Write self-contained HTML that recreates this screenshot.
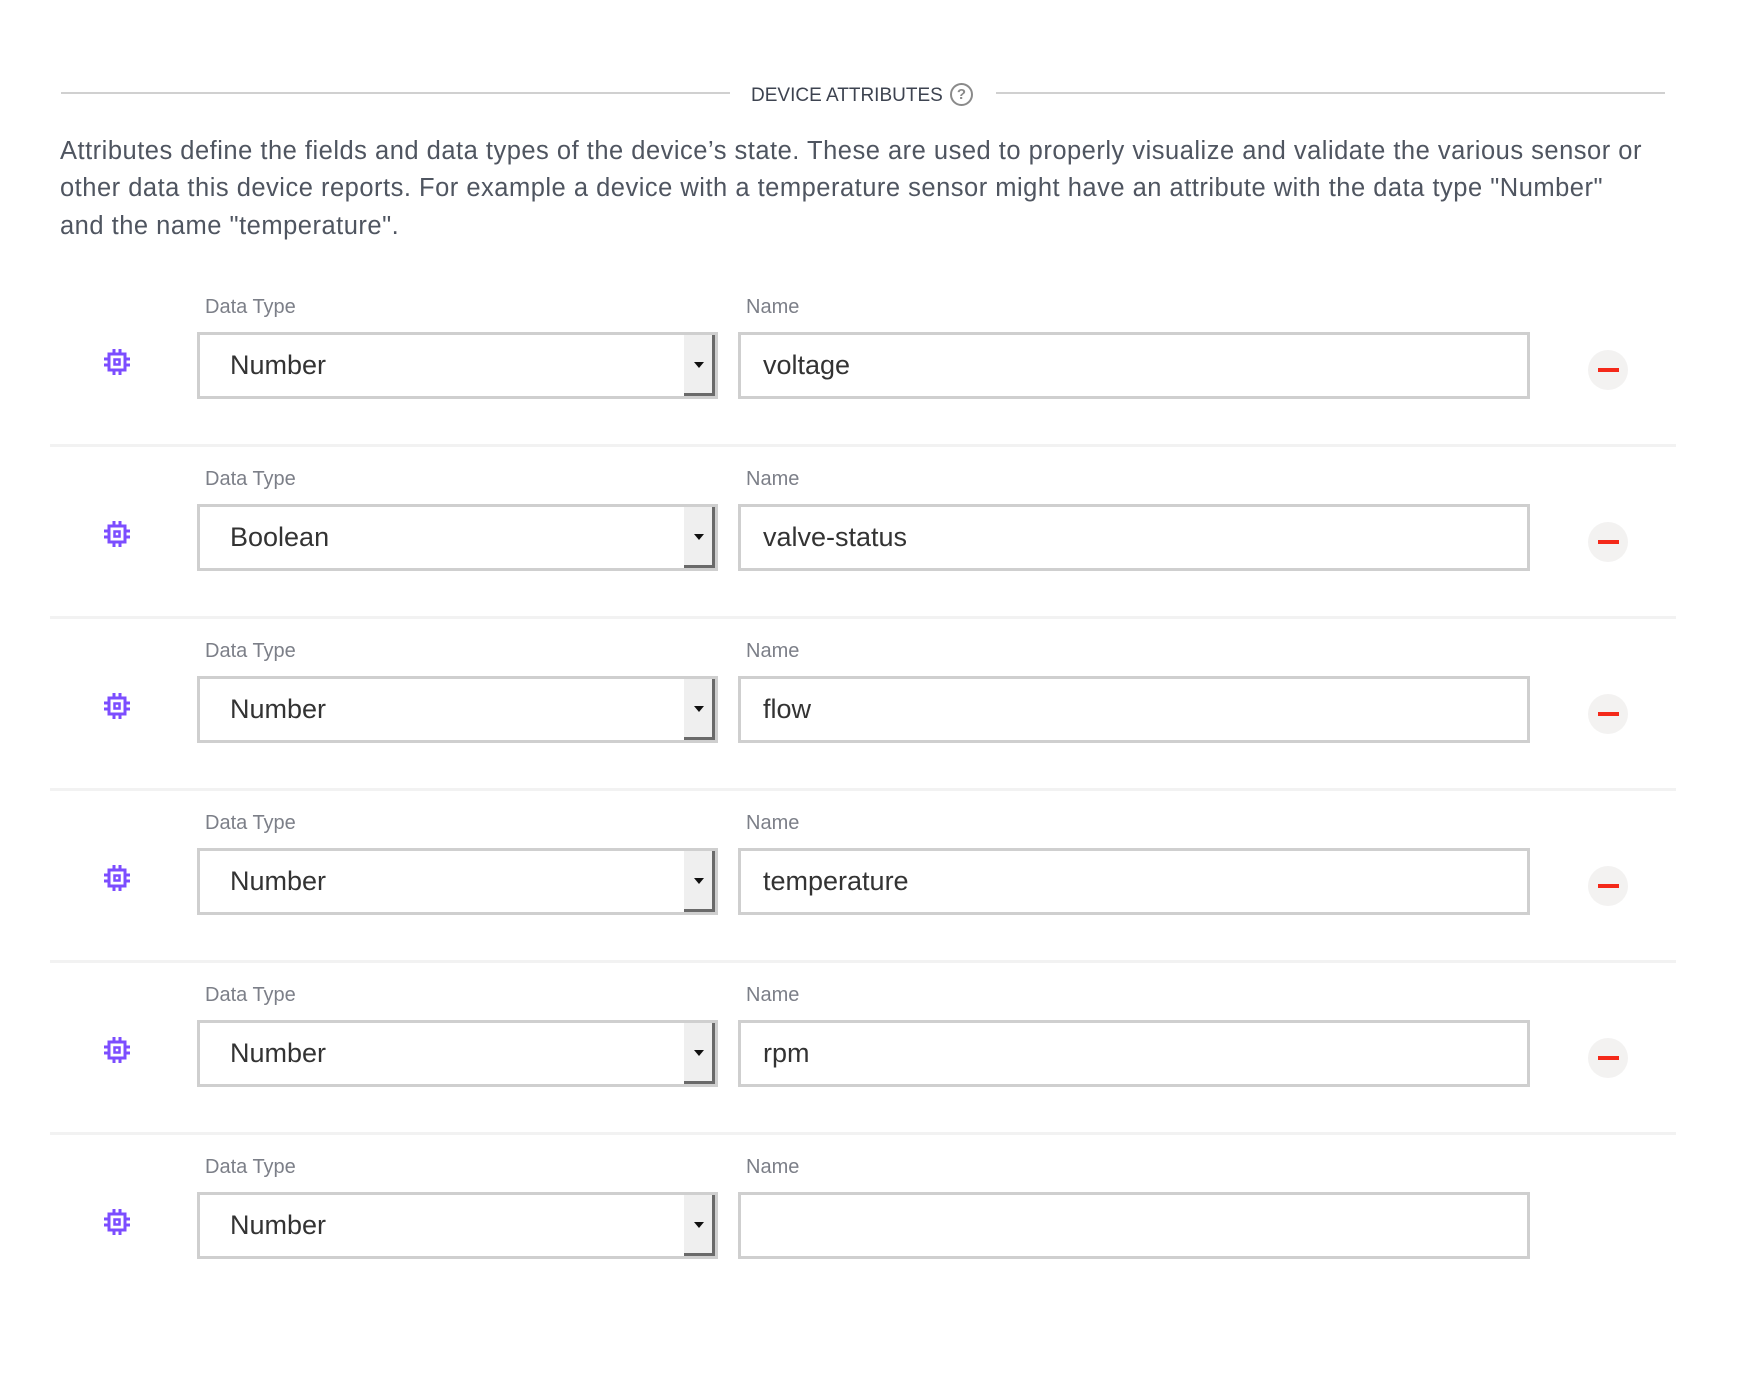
<!DOCTYPE html>
<html><head><meta charset="utf-8"><style>
*{box-sizing:border-box;margin:0;padding:0}
body{width:1754px;height:1386px;background:#fff;font-family:"Liberation Sans",sans-serif;position:relative;overflow:hidden}
.ln{position:absolute;height:2px;background:#d0d0d0;top:92px}
.hd{position:absolute;left:751px;top:85px;font-size:19px;color:#3d4350;white-space:nowrap}
.q{position:absolute;left:950px;top:83px;width:23px;height:23px;border:2px solid #8a8a8a;border-radius:50%;color:#8a8a8a;font-size:15px;font-weight:bold;text-align:center;line-height:19px}
.p{position:absolute;left:60px;font-size:25.5px;color:#4f5560;white-space:nowrap;letter-spacing:0.5px}
.lab{position:absolute;font-size:20px;color:#7c7f88;white-space:nowrap}
.sel{position:absolute;left:197px;width:521px;height:67px;border:3px solid #cfcfcf;background:#fff}
.sel span{position:absolute;left:30px;top:15px;font-size:27px;color:#333}
.btn{position:absolute;right:0;top:0;width:31px;height:61px;background:#efefef;border-right:3px solid #6a6a6a;border-bottom:3px solid #6a6a6a}
.btn:after{content:"";position:absolute;left:10px;top:27px;border-left:5px solid transparent;border-right:5px solid transparent;border-top:6px solid #111}
.inp{position:absolute;left:738px;width:792px;height:67px;border:3px solid #cfcfcf;background:#fff}
.inp span{position:absolute;left:22px;top:15px;font-size:27px;color:#333}
.chip{position:absolute;left:104px;width:26px;height:26px}
.rm{position:absolute;left:1588px;width:40px;height:40px;border-radius:50%;background:#f3f2f1}
.rm:after{content:"";position:absolute;left:10px;top:18px;width:21px;height:4px;background:#f4291a}
.sep{position:absolute;left:50px;width:1626px;height:3px;background:#f2f2f2}
</style></head><body>
<div class="ln" style="left:61px;width:669px"></div>
<div class="ln" style="left:996px;width:669px"></div>
<div class="hd">DEVICE ATTRIBUTES</div>
<div class="q">?</div>
<div class="p" style="top:137px">Attributes define the fields and data types of the device’s state. These are used to properly visualize and validate the various sensor or</div>
<div class="p" style="top:174px">other data this device reports. For example a device with a temperature sensor might have an attribute with the data type "Number"</div>
<div class="p" style="top:212px">and the name "temperature".</div>

<div style="position:absolute;top:0px;left:0">
<div class="lab" style="left:205px;top:296px">Data Type</div><div class="lab" style="left:746px;top:296px">Name</div>
<svg class="chip" style="top:349px" viewBox="0 0 26 26"><g fill="none" stroke="#7c4dff" stroke-width="3"><rect x="5" y="5" width="16" height="16"/><rect x="10.5" y="10.5" width="5" height="5" stroke-width="2.5"/><path d="M10 0v5M16 0v5M10 21v5M16 21v5M0 10h5M0 16h5M21 10h5M21 16h5"/></g></svg>
<div class="sel" style="top:332px"><span>Number</span><div class="btn"></div></div>
<div class="inp" style="top:332px"><span>voltage</span></div>
<div class="rm" style="top:350px"></div>
<div class="sep" style="top:444px"></div>
</div>
<div style="position:absolute;top:172px;left:0">
<div class="lab" style="left:205px;top:296px">Data Type</div><div class="lab" style="left:746px;top:296px">Name</div>
<svg class="chip" style="top:349px" viewBox="0 0 26 26"><g fill="none" stroke="#7c4dff" stroke-width="3"><rect x="5" y="5" width="16" height="16"/><rect x="10.5" y="10.5" width="5" height="5" stroke-width="2.5"/><path d="M10 0v5M16 0v5M10 21v5M16 21v5M0 10h5M0 16h5M21 10h5M21 16h5"/></g></svg>
<div class="sel" style="top:332px"><span>Boolean</span><div class="btn"></div></div>
<div class="inp" style="top:332px"><span>valve-status</span></div>
<div class="rm" style="top:350px"></div>
<div class="sep" style="top:444px"></div>
</div>
<div style="position:absolute;top:344px;left:0">
<div class="lab" style="left:205px;top:296px">Data Type</div><div class="lab" style="left:746px;top:296px">Name</div>
<svg class="chip" style="top:349px" viewBox="0 0 26 26"><g fill="none" stroke="#7c4dff" stroke-width="3"><rect x="5" y="5" width="16" height="16"/><rect x="10.5" y="10.5" width="5" height="5" stroke-width="2.5"/><path d="M10 0v5M16 0v5M10 21v5M16 21v5M0 10h5M0 16h5M21 10h5M21 16h5"/></g></svg>
<div class="sel" style="top:332px"><span>Number</span><div class="btn"></div></div>
<div class="inp" style="top:332px"><span>flow</span></div>
<div class="rm" style="top:350px"></div>
<div class="sep" style="top:444px"></div>
</div>
<div style="position:absolute;top:516px;left:0">
<div class="lab" style="left:205px;top:296px">Data Type</div><div class="lab" style="left:746px;top:296px">Name</div>
<svg class="chip" style="top:349px" viewBox="0 0 26 26"><g fill="none" stroke="#7c4dff" stroke-width="3"><rect x="5" y="5" width="16" height="16"/><rect x="10.5" y="10.5" width="5" height="5" stroke-width="2.5"/><path d="M10 0v5M16 0v5M10 21v5M16 21v5M0 10h5M0 16h5M21 10h5M21 16h5"/></g></svg>
<div class="sel" style="top:332px"><span>Number</span><div class="btn"></div></div>
<div class="inp" style="top:332px"><span>temperature</span></div>
<div class="rm" style="top:350px"></div>
<div class="sep" style="top:444px"></div>
</div>
<div style="position:absolute;top:688px;left:0">
<div class="lab" style="left:205px;top:296px">Data Type</div><div class="lab" style="left:746px;top:296px">Name</div>
<svg class="chip" style="top:349px" viewBox="0 0 26 26"><g fill="none" stroke="#7c4dff" stroke-width="3"><rect x="5" y="5" width="16" height="16"/><rect x="10.5" y="10.5" width="5" height="5" stroke-width="2.5"/><path d="M10 0v5M16 0v5M10 21v5M16 21v5M0 10h5M0 16h5M21 10h5M21 16h5"/></g></svg>
<div class="sel" style="top:332px"><span>Number</span><div class="btn"></div></div>
<div class="inp" style="top:332px"><span>rpm</span></div>
<div class="rm" style="top:350px"></div>
<div class="sep" style="top:444px"></div>
</div>
<div style="position:absolute;top:860px;left:0">
<div class="lab" style="left:205px;top:296px">Data Type</div><div class="lab" style="left:746px;top:296px">Name</div>
<svg class="chip" style="top:349px" viewBox="0 0 26 26"><g fill="none" stroke="#7c4dff" stroke-width="3"><rect x="5" y="5" width="16" height="16"/><rect x="10.5" y="10.5" width="5" height="5" stroke-width="2.5"/><path d="M10 0v5M16 0v5M10 21v5M16 21v5M0 10h5M0 16h5M21 10h5M21 16h5"/></g></svg>
<div class="sel" style="top:332px"><span>Number</span><div class="btn"></div></div>
<div class="inp" style="top:332px"><span></span></div>
</div>
</body></html>
